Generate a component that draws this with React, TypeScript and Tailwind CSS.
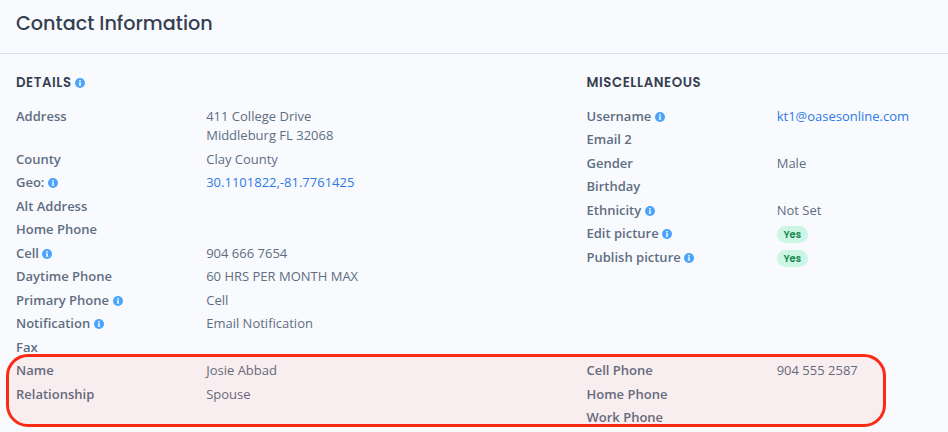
import React from 'react';

interface Field {
  label: string;
  info?: boolean;
  lines?: string[];
  link?: boolean;
  badge?: string;
}

const details: Field[] = [
  { label: 'Address', lines: ['411 College Drive', 'Middleburg FL 32068'] },
  { label: 'County', lines: ['Clay County'] },
  { label: 'Geo:', info: true, lines: ['30.1101822,-81.7761425'], link: true },
  { label: 'Alt Address' },
  { label: 'Home Phone' },
  { label: 'Cell', info: true, lines: ['904 666 7654'] },
  { label: 'Daytime Phone', lines: ['60 HRS PER MONTH MAX'] },
  { label: 'Primary Phone', info: true, lines: ['Cell'] },
  { label: 'Notification', info: true, lines: ['Email Notification'] },
  { label: 'Fax' },
];

const misc: Field[] = [
  { label: 'Username', info: true, lines: ['kt1@oasesonline.com'], link: true },
  { label: 'Email 2' },
  { label: 'Gender', lines: ['Male'] },
  { label: 'Birthday' },
  { label: 'Ethnicity', info: true, lines: ['Not Set'] },
  { label: 'Edit picture', info: true, badge: 'Yes' },
  { label: 'Publish picture', info: true, badge: 'Yes' },
];

const contact: Field[] = [
  { label: 'Name', lines: ['Josie Abbad'] },
  { label: 'Relationship', lines: ['Spouse'] },
];

const contactPhones: Field[] = [
  { label: 'Cell Phone', lines: ['904 555 2587'] },
  { label: 'Home Phone' },
  { label: 'Work Phone' },
];

function InfoIcon() {
  return (
    <svg viewBox="0 0 10 10" className="mt-px size-[10px] shrink-0">
      <circle cx="5" cy="5" r="5" fill="#4ba3fb" />
      <path d="M4.1 2h1.8v1.5H4.1zM3.9 4.2h2v2.7h.3v.9H3.8v-.9h.3V5.1h-.2z" fill="#e4f1ff" />
    </svg>
  );
}

function FieldRow({ label, info, lines = [], link, badge }: Field) {
  return (
    <div className="flex min-h-[23.5px] py-[2px]">
      <dt className="flex w-[190.2px] shrink-0 items-center gap-[3.5px] self-start font-[590]">
        {label}
        {info && <InfoIcon />}
      </dt>
      <dd className={link ? 'text-[#2c7be5]' : ''}>
        {lines.map((line) => (
          <div key={line}>{line}</div>
        ))}
        {badge && (
          <span className="mt-[2px] -mb-[2px] block h-[17px] w-[31px] rounded-full bg-[#ccf6e4] text-center font-[Poppins,Inter,sans-serif] text-[9.8px] leading-[18px] font-semibold text-[#15824f]">
            {badge}
          </span>
        )}
      </dd>
    </div>
  );
}

function Fields({ items }: { items: Field[] }) {
  return (
    <dl>
      {items.map((item) => (
        <FieldRow key={item.label} {...item} />
      ))}
    </dl>
  );
}

export default function App() {
  return (
    <div className="relative h-[432px] w-[948px] overflow-hidden bg-[#f9fafe] font-['Open_Sans','Noto_Sans',sans-serif] text-[13px] leading-[19.5px] text-[#5e6e82]">
      <header className="flex h-[54px] items-center border-b border-[#d8e2ef] px-4 pb-[6px]">
        <h1 className="font-[Poppins,Inter,sans-serif] text-[19.2px] font-medium text-[#344050]">Contact Information</h1>
      </header>

      <main className="grid grid-cols-[570.5px_1fr] pl-4">
        <section>
          <h2 className="flex h-[50.7px] items-center gap-[3.5px] pt-[7px] font-[Poppins,Inter,sans-serif] text-[13.3px] font-semibold tracking-[0.56px] text-[#344050]">
            DETAILS
            <InfoIcon />
          </h2>
          <Fields items={details} />
        </section>
        <section>
          <h2 className="flex h-[50.7px] items-center pt-[7px] font-[Poppins,Inter,sans-serif] text-[13.3px] font-semibold tracking-[0.56px] text-[#344050]">
            MISCELLANEOUS
          </h2>
          <Fields items={misc} />
        </section>
        <Fields items={contact} />
        <Fields items={contactPhones} />
      </main>

      {/* Highlight around the emergency contact */}
      <div className="pointer-events-none absolute left-[6px] top-[354px] h-[73px] w-[880px] rounded-[22px] border-3 border-[#fb2a15] bg-[#e83010]/6" />
    </div>
  );
}
